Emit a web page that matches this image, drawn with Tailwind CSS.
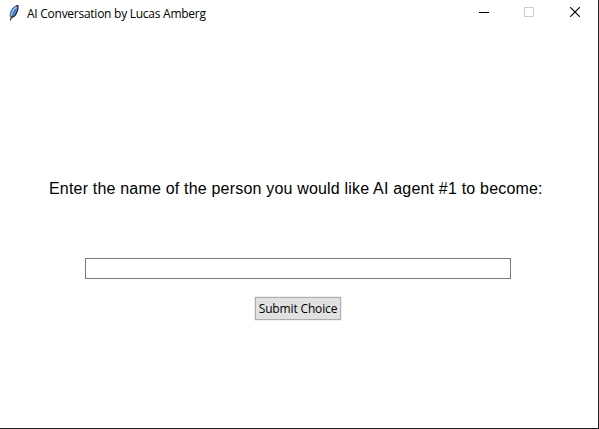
<!DOCTYPE html>
<html lang="en">
<head>
<meta charset="utf-8">
<title>AI Conversation by Lucas Amberg</title>
<script src="https://cdn.jsdelivr.net/npm/@tailwindcss/browser@4"></script>
</head>
<body class="bg-white">
<div class="flex h-[429px] w-[599px] flex-col overflow-hidden border-r border-b border-[#202020] bg-white text-black">
  <header class="flex h-[26px] shrink-0 items-center pl-2">
    <svg class="h-4 w-3 shrink-0" viewBox="0 0 12 16">
      <path d="M10 .5 7 1 4 4 2.500 7.500 2 11.500 3.500 12.500 6.500 11 8.500 7.500 10 3Z" fill="#4f8fdc"/>
      <path d="M8.500 2 6 4.500 4.200 8 3.500 11" fill="none" stroke="#9cc7f2" stroke-width="1.300"/>
      <path d="M7.500 1 5 3 3 6 2 9.500 2.500 12" fill="none" stroke="#4a5666" stroke-width=".8"/>
      <path d="M8 .8H10L10 3.500 9 7 7 10.500 4 12.500 3 13 2.500 15.500" fill="none" stroke="#10151d" stroke-width="1.100"/>
      <path d="M7.500 4.500 5 9 3 12.500" fill="none" stroke="#24405f" stroke-width=".6"/>
    </svg>
    <h1 class="ml-[7px] w-[180px] pt-px font-['Open_Sans','Noto_Sans',sans-serif] text-[12px] leading-[16px] tracking-[-0.26px] whitespace-nowrap">AI Conversation by Lucas Amberg</h1>
    <div class="ml-auto flex h-full">
      <button class="flex w-[46px] justify-center pt-[7px]" aria-label="Minimize"><svg class="h-[10px] w-[10px]" viewBox="0 0 10 10" shape-rendering="crispEdges"><path d="M0 5.500H10" stroke="#000"/></svg></button>
      <button class="flex w-[45px] justify-start pt-[7px] pl-[17px]" aria-label="Maximize"><svg class="h-[10px] w-[10px]" viewBox="0 0 10 10" shape-rendering="crispEdges"><path d="M.5 .5H9.500V9.500H.5Z" fill="none" stroke="#ccc"/></svg></button>
      <button class="flex w-[46px] justify-center pt-[7px]" aria-label="Close"><svg class="h-[10px] w-[10px]" viewBox="0 0 10 10"><path d="M.2 .2 9.800 9.800M9.800 .2 .2 9.800" stroke="#000" stroke-width="1.200"/></svg></button>
    </div>
  </header>
  <main class="flex flex-col items-start pt-[153px]">
    <label for="agent" class="ml-[49px] h-5 font-['Liberation_Sans',Arial,sans-serif] text-[16px] leading-5 tracking-[0.19px] whitespace-nowrap">Enter the name of the person you would like AI agent #1 to become:</label>
    <input id="agent" type="text" class="mt-[59px] ml-[85px] h-[21px] w-[426px] border border-[#7a7a7a] bg-white px-1 outline-none">
    <button class="mt-[17px] ml-[254px] h-[25px] w-[88px] border border-[#f0f0f0] bg-[#adadad] p-px"><span class="flex h-full items-center justify-center bg-[#e1e1e1] font-['Open_Sans','Noto_Sans',sans-serif] text-[12px] leading-4 tracking-[-0.15px] whitespace-nowrap">Submit Choice</span></button>
  </main>
</div>
</body>
</html>
